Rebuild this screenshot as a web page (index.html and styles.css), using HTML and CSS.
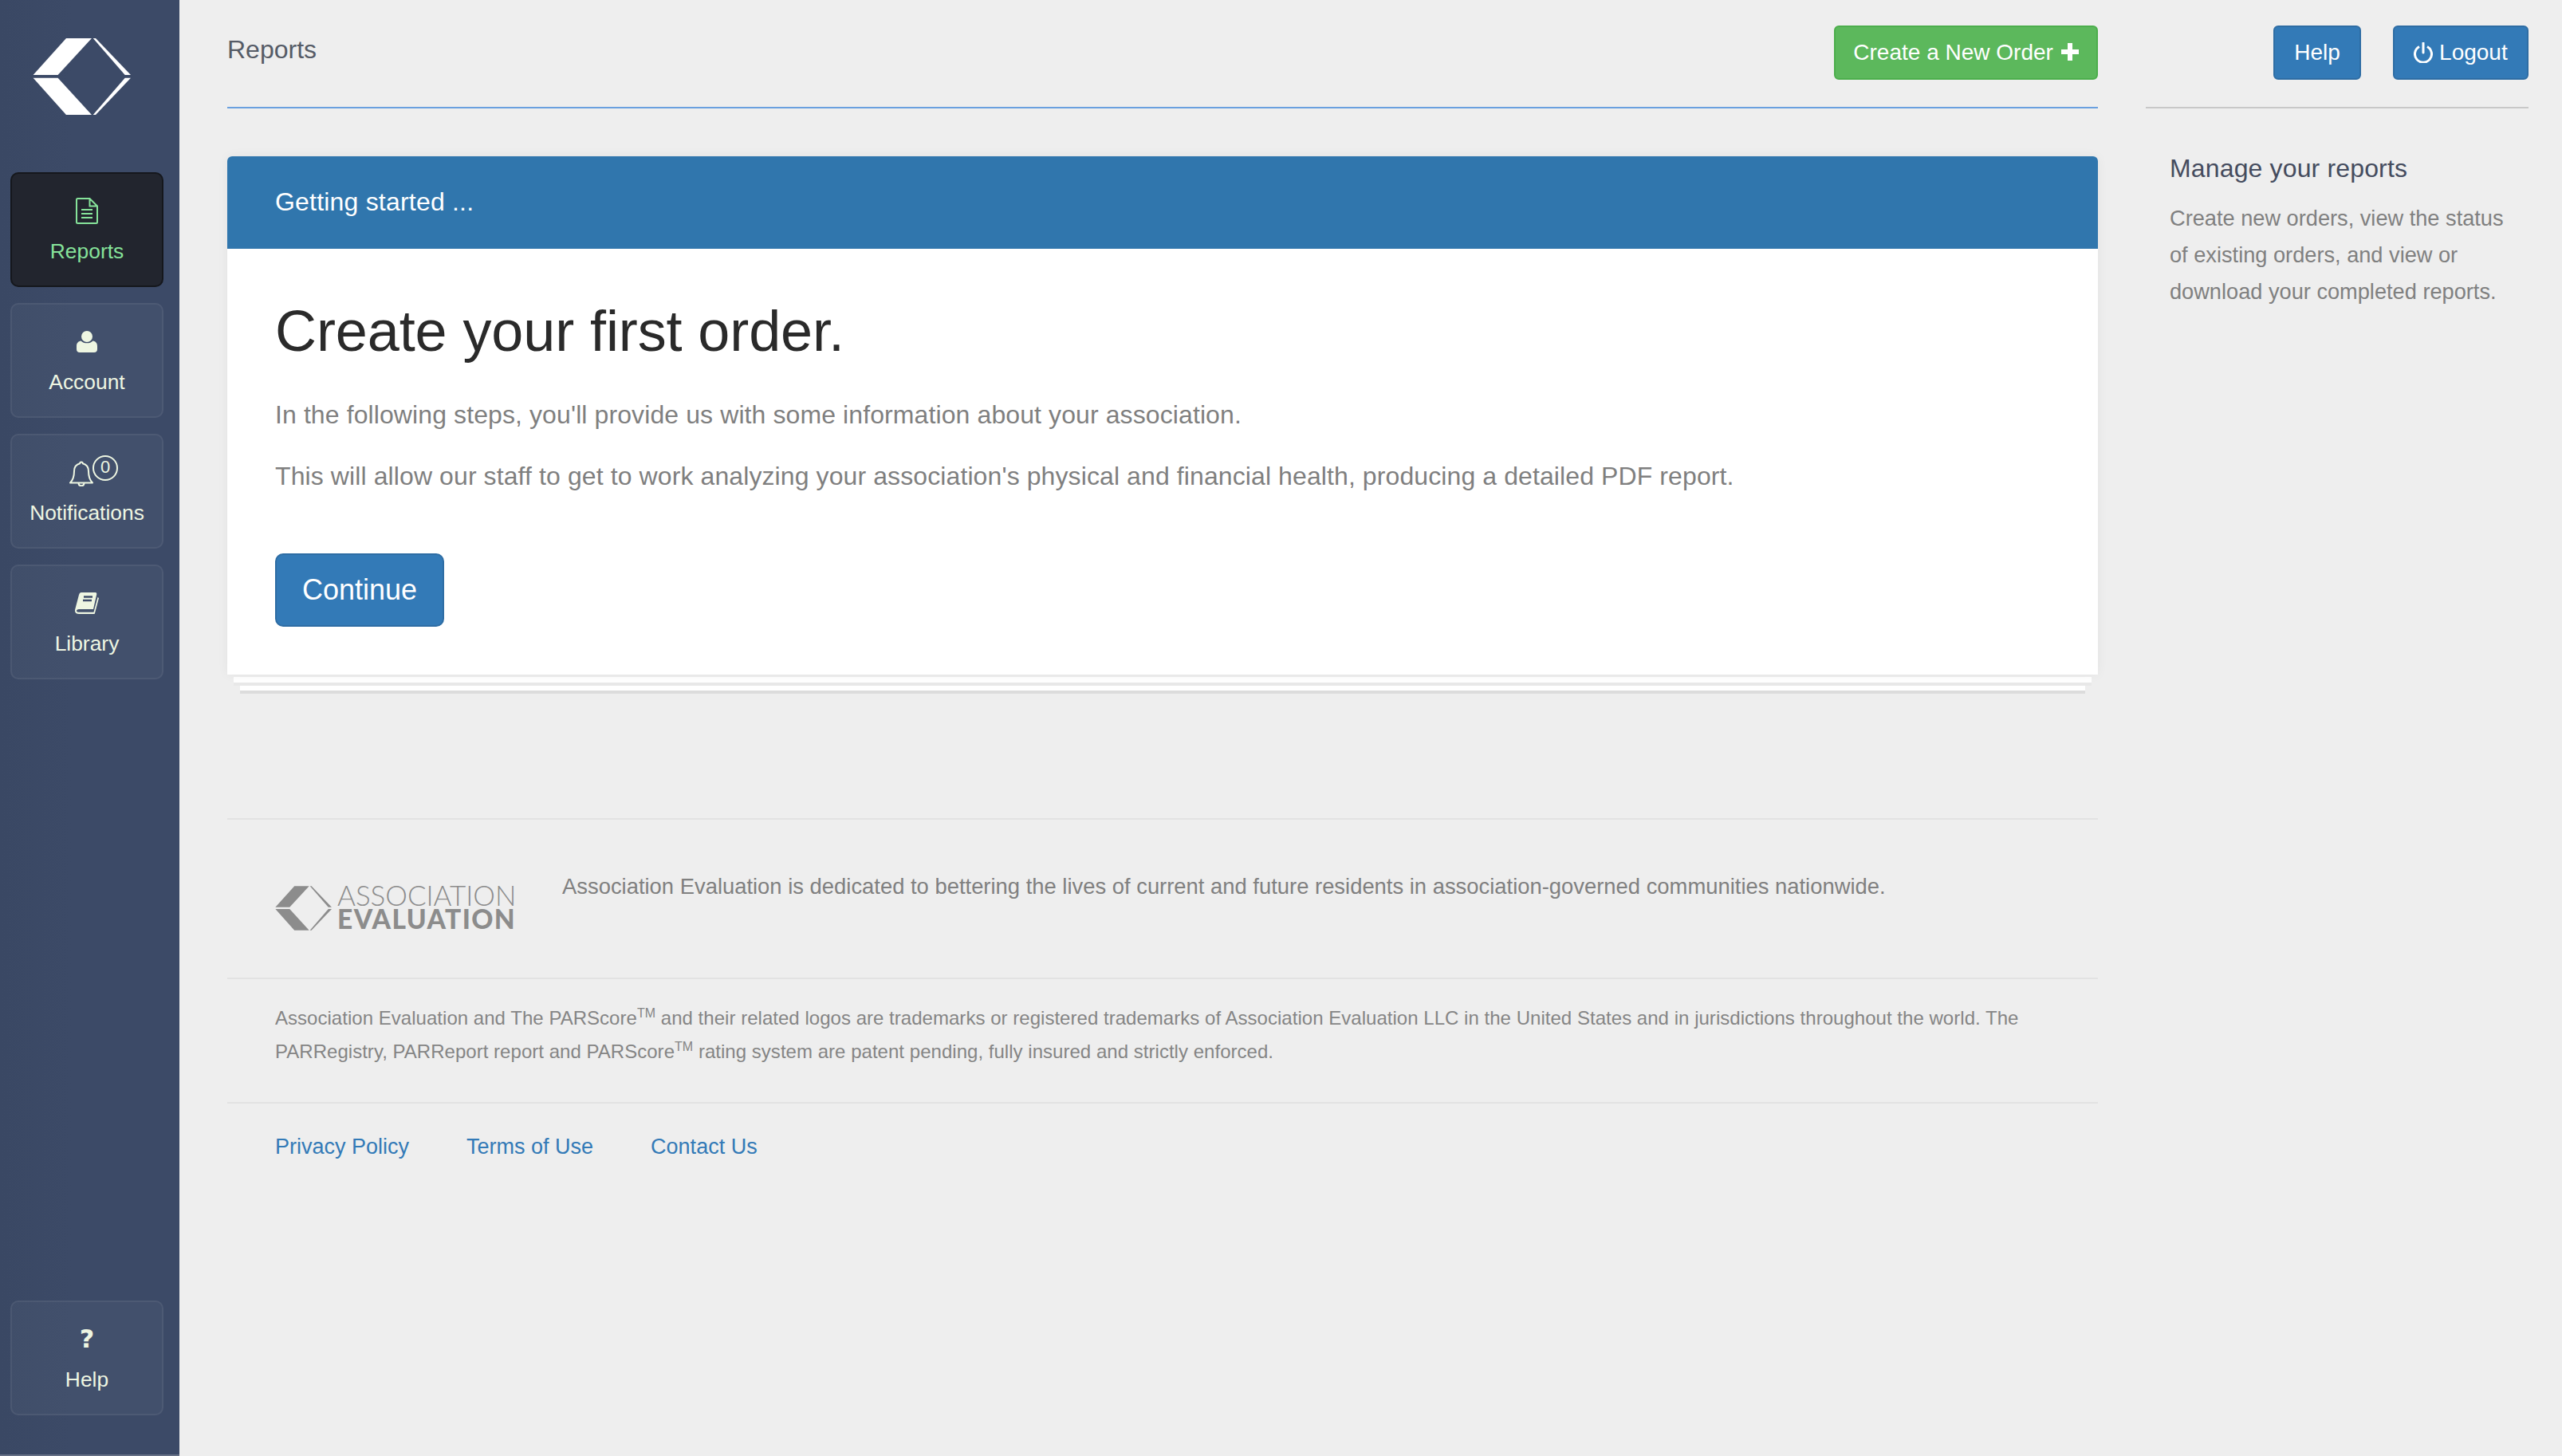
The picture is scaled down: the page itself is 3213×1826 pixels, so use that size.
FILE: index.html
```html
<!DOCTYPE html>
<html lang="en">
<head>
<meta charset="utf-8">
<title>Reports</title>
<link rel="stylesheet" href="styles.css">
</head>
<body>
<svg class="defs" width="0" height="0" aria-hidden="true">
  <symbol id="mark" viewBox="0 0 123 96">
    <polygon points="0.6,46 42,0 74,0 31.6,46"/>
    <polygon points="0.6,49.7 42,96 74,96 31.6,49.7"/>
    <polygon points="75.7,0 79,0 123,46 115.7,46"/>
    <polygon points="115.7,49.7 123,49.7 79,96 75.7,96"/>
  </symbol>
</svg>
<aside class="sidebar">
  <svg class="logo"><use href="#mark"/></svg>
  <nav class="nav">
    <a class="nav-item active">
      <span class="nav-icon">
        <svg class="ico-doc" viewBox="0 0 28 33"><path d="M2.5 1h15l9.5 9.5V30.5a1.500 1.500 0 0 1-1.500 1.500H2.500A1.500 1.500 0 0 1 1 30.500V2.500A1.500 1.500 0 0 1 2.500 1Z M17.500 1v9.500H27 M7 15h14 M7 20h14 M7 25h14" fill="none" stroke="currentColor" stroke-width="2"/></svg>
      </span>
      <span class="nav-label">Reports</span>
    </a>
    <a class="nav-item">
      <span class="nav-icon">
        <svg class="ico-user" viewBox="0 0 26 27"><circle cx="13" cy="7" r="7" fill="currentColor"/><path d="M5.500 12.500C7.500 14.500 10 15.300 13 15.300s5.500-.8 7.500-2.800C24 13 26 15.500 26 19v4c0 2.500-1.500 4-4 4H4c-2.500 0-4-1.500-4-4v-4c0-3.500 2-6 5.500-6.500Z" fill="currentColor"/></svg>
      </span>
      <span class="nav-label">Account</span>
    </a>
    <a class="nav-item">
      <span class="nav-icon">
        <svg class="ico-bell" viewBox="0 0 30 33"><path d="M15 2.500c-1 0-1.800.8-1.800 1.800C8.500 5.500 6 9.500 6 14c0 7-1.500 11-5 14.500h28C25.500 25 24 21 24 14c0-4.500-2.500-8.500-7.200-9.700 0-1-.8-1.800-1.800-1.800Z M11.500 28.500c0 2.300 1.500 3.800 3.500 3.800s3.500-1.500 3.500-3.800" fill="none" stroke="currentColor" stroke-width="2" stroke-linejoin="round"/></svg>
        <span class="badge">0</span>
      </span>
      <span class="nav-label">Notifications</span>
    </a>
    <a class="nav-item">
      <span class="nav-icon">
        <svg class="ico-book" viewBox="0 0 30 27"><path d="M8 0h17c2 0 2.500 1 2.200 2.500L23 21H5C3 21 2 22 2 23s1 1.800 3 1.800h18.500L28.500 6l1.500 1-5 19c0 .5-.5 1-1 1H5c-3 0-5-1.500-5-4 0-1 .2-2 .5-3L5 3c.5-2 1.500-3 3-3Z" fill="currentColor"/><path d="M11 5.500h11M10 10h11" stroke="#3e4c68" stroke-width="2.400"/></svg>
      </span>
      <span class="nav-label">Library</span>
    </a>
  </nav>
  <a class="nav-item help-item">
    <span class="nav-icon"><span class="ico-q">?</span></span>
    <span class="nav-label">Help</span>
  </a>
</aside>

<main class="main">
  <header class="main-head">
    <h2 class="page-title">Reports</h2>
    <a class="btn btn-green">Create a New Order <svg class="ico-plus" viewBox="0 0 22 22"><path d="M8 0h6v8h8v6h-8v8H8v-8H0V8h8Z" fill="currentColor"/></svg></a>
  </header>

  <section class="panel">
    <div class="panel-head">Getting started ...</div>
    <div class="panel-body">
      <h1 class="panel-title">Create your first order.</h1>
      <p class="panel-text">In the following steps, you'll provide us with some information about your association.</p>
      <p class="panel-text">This will allow our staff to get to work analyzing your association's physical and financial health, producing a detailed PDF report.</p>
      <a class="btn-continue">Continue</a>
    </div>
  </section>
  <div class="sheet-a"></div>
  <div class="sheet-b"></div>

  <footer class="footer">
    <div class="mission">
      <div class="brand">
        <svg class="brand-mark"><use href="#mark"/></svg>
        <div class="brand-words">
          <span class="brand-top">ASSOCIATION</span>
          <span class="brand-bottom">EVALUATION</span>
        </div>
      </div>
      <p class="mission-text">Association Evaluation is dedicated to bettering the lives of current and future residents in association-governed communities nationwide.</p>
    </div>
    <div class="legal">
      <p class="legal-line">Association Evaluation and The PARScore<sup>TM</sup> and their related logos are trademarks or registered trademarks of Association Evaluation LLC in the United States and in jurisdictions throughout the world. The</p>
      <p class="legal-line">PARRegistry, PARReport report and PARScore<sup>TM</sup> rating system are patent pending, fully insured and strictly enforced.</p>
    </div>
    <div class="links">
      <a class="link">Privacy Policy</a>
      <a class="link">Terms of Use</a>
      <a class="link">Contact Us</a>
    </div>
  </footer>
</main>

<aside class="side">
  <div class="side-head">
    <a class="btn btn-blue btn-help">Help</a>
    <a class="btn btn-blue btn-logout"><svg class="ico-power" viewBox="0 0 24 26"><path d="M7 5.500a10.500 10.500 0 1 0 10 0" fill="none" stroke="currentColor" stroke-width="3"/><path d="M12 1v12" stroke="currentColor" stroke-width="3" stroke-linecap="round"/></svg> Logout</a>
  </div>
  <div class="side-body">
    <h3 class="side-title">Manage your reports</h3>
    <p class="side-text">Create new orders, view the status of existing orders, and view or download your completed reports.</p>
  </div>
</aside>
</body>
</html>
```
FILE: styles.css
```css
* { box-sizing: border-box; }
html, body { height: 100%; }
body {
  margin: 0;
  display: flex;
  min-height: 1826px;
  background: #eeeeee;
  font-family: "Liberation Sans", Arial, sans-serif;
  font-size: 28px;
  color: #777;
  overflow: hidden;
}
.defs { display: block; height: 0; position: absolute; }
a { text-decoration: none; }

/* Sidebar */
.sidebar {
  width: 225px;
  flex: none;
  height: 1826px;
  background: linear-gradient(90deg, #3a4864, #3c4a67 40%, #3c4a67);
  border-bottom: 2px solid #667086;
  padding: 48px 20px 49px 13px;
  display: flex;
  flex-direction: column;
}
.logo { width: 123px; height: 96px; margin-left: 28px; fill: #fff; flex: none; }
.nav { display: flex; flex-direction: column; gap: 20px; margin-top: 72px; }
.nav-item {
  height: 144px;
  width: 192px;
  border: 2px solid rgba(255,255,255,.06);
  border-radius: 10px;
  background: rgba(255,255,255,.035);
  color: #eef6e2;
  display: flex;
  flex-direction: column;
  align-items: center;
  flex: none;
}
.nav-item.active { background: #22252e; border-color: #15171c; color: #86e39a; }
.help-item { margin-top: auto; }
.nav-icon { height: 34px; margin-top: 29px; display: flex; justify-content: center; align-items: center; position: relative; }
.nav-label { margin-top: 18px; font-size: 26.4px; line-height: 32px; }
.ico-doc { width: 28px; height: 33px; }
.ico-user { width: 26px; height: 27px; }
.ico-bell { width: 30px; height: 33px; margin-left: -14px; margin-top: 3px; }
.ico-book { width: 30px; height: 27px; }
.ico-q { font-size: 32px; font-weight: 700; line-height: 34px; font-family: "DejaVu Sans", sans-serif; }
.badge {
  position: absolute;
  left: 50%;
  margin-left: 7px;
  top: -4px;
  width: 32px;
  height: 32px;
  border: 2px solid currentColor;
  border-radius: 50%;
  font-size: 22px;
  line-height: 25px;
  text-align: center;
}

/* Main */
.main { width: 2346px; flex: none; margin-left: 60px; }
.main-head {
  height: 136px;
  border-bottom: 2px solid #6aa0df;
  padding-top: 32px;
  display: flex;
  justify-content: space-between;
  align-items: flex-start;
}
.page-title { margin: 12px 0 0; font-size: 32px; line-height: 36px; font-weight: 400; color: #555b66; }
.btn {
  height: 68px;
  border-radius: 6px;
  color: #fff;
  font-size: 28px;
  display: inline-flex;
  align-items: center;
  justify-content: center;
  white-space: pre;
}
.btn-green { width: 331px; background: #5cb85c; border: 2px solid #4cae4c; }
.btn-blue { background: #337ab7; border: 2px solid #2e6da4; }
.ico-plus { width: 22px; height: 22px; margin-left: 2px; margin-bottom: 3px; }
.ico-power { width: 24px; height: 26px; margin-right: 0; }

.panel {
  margin-top: 60px;
  background: #fff;
  border-radius: 6px 6px 0 0;
  box-shadow: 0 0 14px rgba(0,0,0,.05);
  position: relative;
}
.panel-head {
  height: 116px;
  background: #3076ad;
  border-radius: 6px 6px 0 0;
  color: #fff;
  font-size: 32px;
  letter-spacing: .2px;
  line-height: 114px;
  padding-left: 60px;
}
.panel-body { height: 534px; padding: 60px 60px 0; }
.panel-title { margin: 0; font-size: 72px; line-height: 86px; font-weight: 400; letter-spacing: -.1px; color: #2a2a2a; }
.panel-text { margin: 37px 0 0; font-size: 32px; line-height: 40px; letter-spacing: .1px; color: #7f7f7f; }
.panel-title + .panel-text { margin-top: 42px; }
.btn-continue {
  margin-top: 77px;
  display: inline-flex;
  align-items: center;
  justify-content: center;
  width: 212px;
  height: 92px;
  background: #337ab7;
  border: 2px solid #2e6da4;
  border-radius: 10px;
  color: #fff;
  font-size: 36px;
}
.sheet-a { margin: 3px 8px 0; height: 11px; background: #fff; border-bottom: 4px solid #e8e8e8; }
.sheet-b { margin: 0 16px; height: 10px; background: #fff; border-bottom: 4px solid #dcdcdc; }

.footer { margin-top: 156px; }
.mission {
  height: 202px;
  border-top: 2px solid #e2e2e2;
  border-bottom: 2px solid #e2e2e2;
  padding: 81px 60px 0;
  display: flex;
  align-items: flex-start;
}
.brand { display: flex; width: 360px; flex: none; margin-top: 2px; }
.brand-mark { width: 71px; height: 56px; fill: #8c8c8c; flex: none; }
.brand-words { margin-left: 7px; display: flex; flex-direction: column; color: #8c8c8c; font-family: Lato, sans-serif; }
.brand-top { font-size: 35px; font-weight: 300; line-height: 26px; letter-spacing: -.05px; margin-top: -2px; }
.brand-bottom { font-size: 33.500px; font-weight: 900; line-height: 30px; letter-spacing: 1.400px; margin-top: 2px; }
.mission-text { margin: -17px 0 0; font-size: 27.4px; line-height: 40px; color: #808080; }
.legal {
  height: 156px;
  border-bottom: 2px solid #e2e2e2;
  padding: 28px 60px 0;
  font-size: 24px;
  letter-spacing: .03px;
  line-height: 42px;
  color: #858585;
}
.legal-line { margin: 0; white-space: nowrap; }
.legal sup { font-size: 16px; line-height: 0; vertical-align: 9px; }
.links { display: flex; gap: 72px; padding: 34px 60px 0; }
.link { font-size: 27px; line-height: 40px; color: #337ab7; }

/* Right */
.side { width: 480px; flex: none; margin-left: 60px; }
.side-head {
  height: 136px;
  border-bottom: 2px solid #c8c8c8;
  padding-top: 32px;
  display: flex;
  justify-content: flex-end;
  gap: 40px;
}
.btn-help { width: 110px; }
.btn-logout { width: 170px; }
.side-body { padding: 56px 30px 0; }
.side-title { margin: 0; font-size: 32px; line-height: 38px; font-weight: 400; letter-spacing: .15px; color: #454c5e; }
.side-text { margin: 21px 0 0; font-size: 27.2px; line-height: 46px; color: #808080; }
```
